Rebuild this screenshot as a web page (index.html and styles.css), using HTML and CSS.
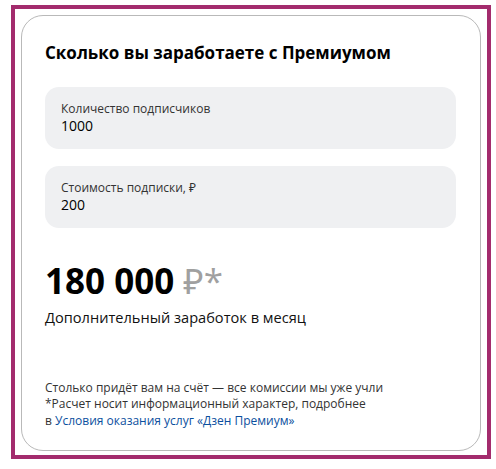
FILE: index.html
```html
<!DOCTYPE html>
<html lang="ru">
<head>
<meta charset="utf-8">
<link rel="stylesheet" href="styles.css">
</head>
<body>
<div class="frame">
  <section class="card">
    <h1 class="title">Сколько вы заработаете с Премиумом</h1>
    <div class="fields">
      <div class="field">
        <div class="field-label">Количество подписчиков</div>
        <div class="field-value">1000</div>
      </div>
      <div class="field">
        <div class="field-label">Стоимость подписки, ₽</div>
        <div class="field-value">200</div>
      </div>
    </div>
    <div class="result">
      <div class="amount">180 000 <span class="currency">₽*</span></div>
      <div class="amount-caption">Дополнительный заработок в месяц</div>
    </div>
    <div class="note">
      <p>Столько придёт вам на счёт — все комиссии мы уже учли</p>
      <p>*Расчет носит информационный характер, подробнее</p>
      <p>в <a class="link" href="#">Условия оказания услуг «Дзен Премиум»</a></p>
    </div>
  </section>
</div>
</body>
</html>
```

FILE: styles.css
```css
html, body {
  margin: 0;
  padding: 0;
  background: #ffffff;
}

body {
  font-family: "Open Sans", "Noto Sans", sans-serif;
  color: #000;
}

.frame {
  box-sizing: border-box;
  width: 480px;
  height: 454px;
  margin: 5px 0 0 11px;
  border: 4px solid #a32b6d;
  padding: 6px 6px 4px 6px;
  background: #fff;
}

.card {
  box-sizing: border-box;
  height: 100%;
  border: 1px solid #b9b9b9;
  border-radius: 22px;
  padding: 25px 24px 21px 23px;
  display: flex;
  flex-direction: column;
}

.title {
  margin: 0;
  font-size: 17px;
  font-weight: 700;
  line-height: 23px;
}

.fields {
  margin-top: 23px;
  display: flex;
  flex-direction: column;
  gap: 17px;
}

.field {
  box-sizing: border-box;
  height: 62px;
  background: #eff0f2;
  border-radius: 14px;
  padding: 14px 16px;
}

.field-label {
  font-size: 12px;
  line-height: 16px;
  color: #333;
}

.field-value {
  font-size: 14px;
  line-height: 18px;
  color: #000;
}

.result {
  margin-top: 32px;
}

.amount {
  font-size: 35px;
  font-weight: 700;
  line-height: 42px;
}

.currency {
  font-weight: 400;
  color: #a0a0a0;
}

.amount-caption {
  margin-top: 5px;
  font-size: 14.6px;
  line-height: 20px;
  color: #111;
}

.note {
  margin-top: auto;
  font-size: 12px;
  line-height: 16.5px;
  color: #333;
}

.note p {
  margin: 0;
}

.link {
  color: #0b4f9e;
  text-decoration: none;
}
```
